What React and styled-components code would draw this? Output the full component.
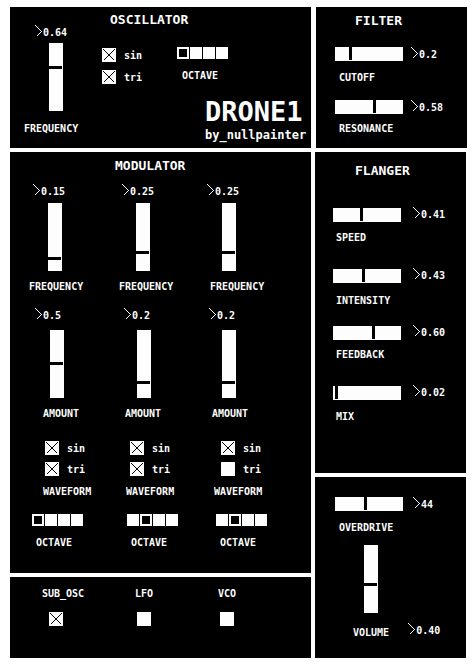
import React from "react";
import styled, { createGlobalStyle, css } from "styled-components";

const INK = "#000";
const LIT = "#fdfdfd";

const GlobalStyle = createGlobalStyle`
  *, *::before, *::after { box-sizing: border-box; }
  body {
    margin: 0;
    background: #fff;
    color: ${LIT};
    font: bold 10px/12px "DejaVu Sans Mono", monospace;
  }
`;

/* ---------- page ---------- */

const Page = styled.main`
  display: grid;
  gap: 4px;
  padding: 7px 0 10px 10px;
`;

const TopRow = styled.div`
  display: grid;
  grid-template-columns: 301fr 151fr;
  gap: 5px;
  padding-right: 9px;
`;

const MainRow = styled.div`
  display: grid;
  grid-template-columns: 301fr 151fr;
  gap: 4px;
  padding-right: 10px;
`;

const Stack = styled.div`
  display: flex;
  flex-direction: column;
  gap: 4px;
`;

const Panel = styled.section`
  background: ${INK};
  padding: ${(p) => p.$top}px 0 ${(p) => p.$bottom}px;
  min-width: 0;
`;

const Title = styled.h2`
  margin: 0;
  padding-left: ${(p) => p.$inset}px;
  font-size: 13px;
  line-height: 16px;
`;

/* ---------- rows inside a panel ---------- */

const Line = styled.div`
  padding-left: ${(p) => p.$inset}px;
  margin-top: ${(p) => p.$gap || 0}px;
`;

const TripleLine = styled(Line)`
  display: grid;
  justify-items: start;
  grid-template-columns: ${(p) => p.$tracks.map((t) => `${t}fr`).join(" ")};
`;

const Caption = styled.label`
  display: block;
  white-space: nowrap;
`;

/* ---------- value read-out ---------- */

const ReadoutBox = styled.output`
  display: flex;
  align-items: flex-start;
  gap: 1px;
  line-height: 16px;
  white-space: nowrap;
`;

const Chevron = styled.svg`
  flex: none;
  width: 7px;
  height: 12px;
  fill: none;
  stroke: ${LIT};
  shape-rendering: crispEdges;
`;

function Readout({ children, htmlFor }) {
  return (
    <ReadoutBox htmlFor={htmlFor}>
      <Chevron viewBox="0 0 7 12" aria-hidden="true">
        <path d="M0.5 0.5L6.5 6.5L1.5 11.5" />
      </Chevron>
      {children}
    </ReadoutBox>
  );
}

/* ---------- sliders ---------- */

const Slider = styled.input.attrs({ type: "range", min: 0, max: 65, step: 1 })`
  appearance: none;
  display: block;
  flex: none;
  margin: 0;
  background: ${LIT};
  border-radius: 0;
  cursor: pointer;
  ${(p) =>
    p.$vertical
      ? css`
          width: 14px;
          height: 68px;
          writing-mode: vertical-lr;
          direction: rtl;
        `
      : css`
          width: 68px;
          height: 14px;
        `}

  &::-webkit-slider-runnable-track {
    width: 100%;
    height: 100%;
  }

  &::-webkit-slider-thumb {
    appearance: none;
    width: ${(p) => (p.$vertical ? 13 : 3)}px;
    height: ${(p) => (p.$vertical ? 3 : 13)}px;
    background: ${INK};
    border: 0;
    border-radius: 0;
  }
`;

const SliderLine = styled(Line)`
  display: flex;
  align-items: ${(p) => (p.$centered ? "center" : "flex-start")};
  gap: ${(p) => p.$spread}px;
`;

function FlatControl({ id, label, value, at, gap, inset, labelInset, spread, labelGap, centered }) {
  return (
    <>
      <SliderLine $inset={inset} $gap={gap} $spread={spread} $centered={centered}>
        <Slider id={id} defaultValue={at} />
        <Readout htmlFor={id}>{value}</Readout>
      </SliderLine>
      <Line $inset={labelInset} $gap={labelGap}>
        <Caption htmlFor={id}>{label}</Caption>
      </Line>
    </>
  );
}

/* ---------- tick boxes ---------- */

const TickBox = styled.span`
  display: grid;
  flex: none;
  width: 14px;
  height: 14px;

  input,
  svg {
    grid-area: 1 / 1;
  }

  input {
    appearance: none;
    margin: 0;
    width: 14px;
    height: 14px;
    background: ${LIT};
    cursor: pointer;
  }

  svg {
    width: 14px;
    height: 14px;
    stroke: ${INK};
    shape-rendering: crispEdges;
    pointer-events: none;
  }

  input:not(:checked) + svg {
    display: none;
  }
`;

function Tick({ id, on }) {
  return (
    <TickBox>
      <input type="checkbox" id={id} defaultChecked={on} />
      <svg viewBox="0 0 14 14" aria-hidden="true">
        <path d="M1.5 1.5L12.5 12.5M12.5 1.5L1.5 12.5" />
      </svg>
    </TickBox>
  );
}

const WaveChoice = styled.label`
  display: flex;
  align-items: flex-start;
  gap: 8px;
  line-height: 16px;
  cursor: pointer;
`;

const WaveList = styled.div`
  display: grid;
  gap: ${(p) => p.$gap}px;
`;

function Waves({ id, sin, tri, gap }) {
  return (
    <WaveList $gap={gap} role="group" aria-label="waveform">
      <WaveChoice htmlFor={`${id}-sin`}>
        <Tick id={`${id}-sin`} on={sin} />
        sin
      </WaveChoice>
      <WaveChoice htmlFor={`${id}-tri`}>
        <Tick id={`${id}-tri`} on={tri} />
        tri
      </WaveChoice>
    </WaveList>
  );
}

/* ---------- octave selector ---------- */

const OctaveStrip = styled.div`
  display: flex;
  gap: 1px;
`;

const OctaveCell = styled.input.attrs({ type: "radio" })`
  appearance: none;
  margin: 0;
  width: 12px;
  height: 12px;
  border: 2px solid ${LIT};
  background: ${LIT};
  cursor: pointer;

  &:checked {
    background: ${INK};
  }
`;

function Octave({ id, selected }) {
  return (
    <OctaveStrip role="radiogroup" aria-labelledby={`${id}-label`}>
      {[0, 1, 2, 3].map((n) => (
        <OctaveCell
          key={n}
          id={`${id}-${n}`}
          name={id}
          value={n}
          aria-label={`${n}`}
          defaultChecked={n === selected}
        />
      ))}
    </OctaveStrip>
  );
}

/* ---------- oscillator ---------- */

const OscPanel = styled(Panel)`
  display: grid;
  grid-template-columns: 92fr 75fr 134fr;
  grid-template-rows: auto auto 1fr;
`;

const OscFrequency = styled.div`
  grid-row: 1 / -1;
  padding-top: 13px;
`;

const OscTitle = styled(Title)`
  grid-column: 2 / -1;
`;

const OscBlock = styled.div`
  padding-top: ${(p) => p.$top}px;
`;

const Brand = styled.header`
  grid-column: 3;
  padding: 10px 0 0 28px;
  white-space: nowrap;
`;

const BrandName = styled.h1`
  margin: 0;
  font-size: 27px;
  line-height: 32px;
`;

const Byline = styled.p`
  margin: 0;
  font-size: 12px;
  line-height: 14px;
`;

function Oscillator() {
  return (
    <OscPanel $top={5} $bottom={6}>
      <OscFrequency>
        <Line $inset={25}>
          <Readout htmlFor="osc-freq">0.64</Readout>
        </Line>
        <Line $inset={39} $gap={2}>
          <Slider $vertical id="osc-freq" defaultValue={42} />
        </Line>
        <Line $inset={14} $gap={12}>
          <Caption htmlFor="osc-freq">FREQUENCY</Caption>
        </Line>
      </OscFrequency>
      <OscTitle $inset={8}>OSCILLATOR</OscTitle>
      <OscBlock $top={20}>
        <Waves id="osc" sin tri gap={6} />
      </OscBlock>
      <OscBlock $top={19}>
        <Octave id="osc-oct" selected={0} />
        <Line $inset={5} $gap={11}>
          <Caption as="span" id="osc-oct-label">OCTAVE</Caption>
        </Line>
      </OscBlock>
      <Brand>
        <BrandName>DRONE1</BrandName>
        <Byline>by_nullpainter</Byline>
      </Brand>
    </OscPanel>
  );
}

/* ---------- modulator ---------- */

const modulators = [
  { id: "m1", freq: "0.15", freqAt: 11, amount: "0.5", amountAt: 33, sin: true, tri: true, octave: 0 },
  { id: "m2", freq: "0.25", freqAt: 17, amount: "0.2", amountAt: 14, sin: true, tri: true, octave: 1 },
  { id: "m3", freq: "0.25", freqAt: 17, amount: "0.2", amountAt: 14, sin: true, tri: false, octave: 1 },
];

function Modulator() {
  return (
    <Panel $top={6} $bottom={24}>
      <Title $inset={105}>MODULATOR</Title>
      <TripleLine $inset={23} $gap={10} $tracks={[89, 85, 104]}>
        {modulators.map((m) => (
          <Readout key={m.id} htmlFor={`${m.id}-freq`}>{m.freq}</Readout>
        ))}
      </TripleLine>
      <TripleLine $inset={38} $gap={3} $tracks={[88, 86, 89]}>
        {modulators.map((m) => (
          <Slider $vertical key={m.id} id={`${m.id}-freq`} defaultValue={m.freqAt} />
        ))}
      </TripleLine>
      <TripleLine $inset={19} $gap={10} $tracks={[90, 91, 101]}>
        {modulators.map((m) => (
          <Caption key={m.id} htmlFor={`${m.id}-freq`}>FREQUENCY</Caption>
        ))}
      </TripleLine>
      <TripleLine $inset={25} $gap={15} $tracks={[89, 85, 102]}>
        {modulators.map((m) => (
          <Readout key={m.id} htmlFor={`${m.id}-amt`}>{m.amount}</Readout>
        ))}
      </TripleLine>
      <TripleLine $inset={40} $gap={6} $tracks={[87, 85, 89]}>
        {modulators.map((m) => (
          <Slider $vertical key={m.id} id={`${m.id}-amt`} defaultValue={m.amountAt} />
        ))}
      </TripleLine>
      <TripleLine $inset={33} $gap={10} $tracks={[82, 87, 99]}>
        {modulators.map((m) => (
          <Caption key={m.id} htmlFor={`${m.id}-amt`}>AMOUNT</Caption>
        ))}
      </TripleLine>
      <TripleLine $inset={35} $gap={21} $tracks={[85, 91, 90]}>
        {modulators.map((m) => (
          <Waves key={m.id} id={m.id} sin={m.sin} tri={m.tri} gap={5} />
        ))}
      </TripleLine>
      <TripleLine $inset={33} $gap={8} $tracks={[83, 88, 97]}>
        {modulators.map((m) => (
          <Caption as="span" key={m.id}>WAVEFORM</Caption>
        ))}
      </TripleLine>
      <TripleLine $inset={22} $gap={16} $tracks={[95, 89, 95]}>
        {modulators.map((m) => (
          <Octave key={m.id} id={`${m.id}-oct`} selected={m.octave} />
        ))}
      </TripleLine>
      <TripleLine $inset={26} $gap={11} $tracks={[95, 89, 91]}>
        {modulators.map((m) => (
          <Caption as="span" key={m.id} id={`${m.id}-oct-label`}>OCTAVE</Caption>
        ))}
      </TripleLine>
    </Panel>
  );
}

/* ---------- switches ---------- */

const switches = [
  { id: "sub", label: "SUB_OSC", on: true },
  { id: "lfo", label: "LFO", on: false },
  { id: "vco", label: "VCO", on: false },
];

function Switches() {
  return (
    <Panel $top={11} $bottom={32}>
      <TripleLine $inset={32} $tracks={[93, 83, 93]}>
        {switches.map((s) => (
          <Caption key={s.id} htmlFor={s.id}>{s.label}</Caption>
        ))}
      </TripleLine>
      <TripleLine $inset={39} $gap={12} $tracks={[88, 83, 91]}>
        {switches.map((s) => (
          <Tick key={s.id} id={s.id} on={s.on} />
        ))}
      </TripleLine>
    </Panel>
  );
}

/* ---------- right column ---------- */

function Filter() {
  const shared = { inset: 19, labelInset: 23, spread: 8 };
  return (
    <Panel $top={6} $bottom={13}>
      <Title $inset={39}>FILTER</Title>
      <FlatControl {...shared} id="cutoff" label="CUTOFF" value="0.2" at={14} gap={18} labelGap={9} />
      <FlatControl {...shared} id="resonance" label="RESONANCE" value="0.58" at={38} gap={16} labelGap={7} />
    </Panel>
  );
}

function Flanger() {
  const shared = { inset: 18, labelInset: 21, spread: 12, centered: true };
  return (
    <Panel $top={11} $bottom={50}>
      <Title $inset={40}>FLANGER</Title>
      <FlatControl {...shared} id="speed" label="SPEED" value="0.41" at={27} gap={28} labelGap={9} />
      <FlatControl {...shared} id="intensity" label="INTENSITY" value="0.43" at={29} gap={24} labelGap={11} />
      <FlatControl {...shared} id="feedback" label="FEEDBACK" value="0.60" at={39} gap={18} labelGap={8} />
      <FlatControl {...shared} id="mix" label="MIX" value="0.02" at={2} gap={24} labelGap={10} />
    </Panel>
  );
}

const VolumeFoot = styled(Line)`
  display: flex;
  align-items: flex-end;
  gap: 19px;
`;

function Output() {
  return (
    <Panel $top={20} $bottom={19}>
      <FlatControl
        id="overdrive"
        label="OVERDRIVE"
        value="44"
        at={29}
        inset={20}
        labelInset={24}
        spread={10}
        labelGap={9}
      />
      <Line $inset={49} $gap={11}>
        <Slider $vertical id="volume" defaultValue={27} />
      </Line>
      <VolumeFoot $inset={38} $gap={10}>
        <Caption htmlFor="volume">VOLUME</Caption>
        <Readout htmlFor="volume">0.40</Readout>
      </VolumeFoot>
    </Panel>
  );
}

export default function App() {
  return (
    <>
      <GlobalStyle />
      <Page>
        <TopRow>
          <Oscillator />
          <Filter />
        </TopRow>
        <MainRow>
          <Stack>
            <Modulator />
            <Switches />
          </Stack>
          <Stack>
            <Flanger />
            <Output />
          </Stack>
        </MainRow>
      </Page>
    </>
  );
}
